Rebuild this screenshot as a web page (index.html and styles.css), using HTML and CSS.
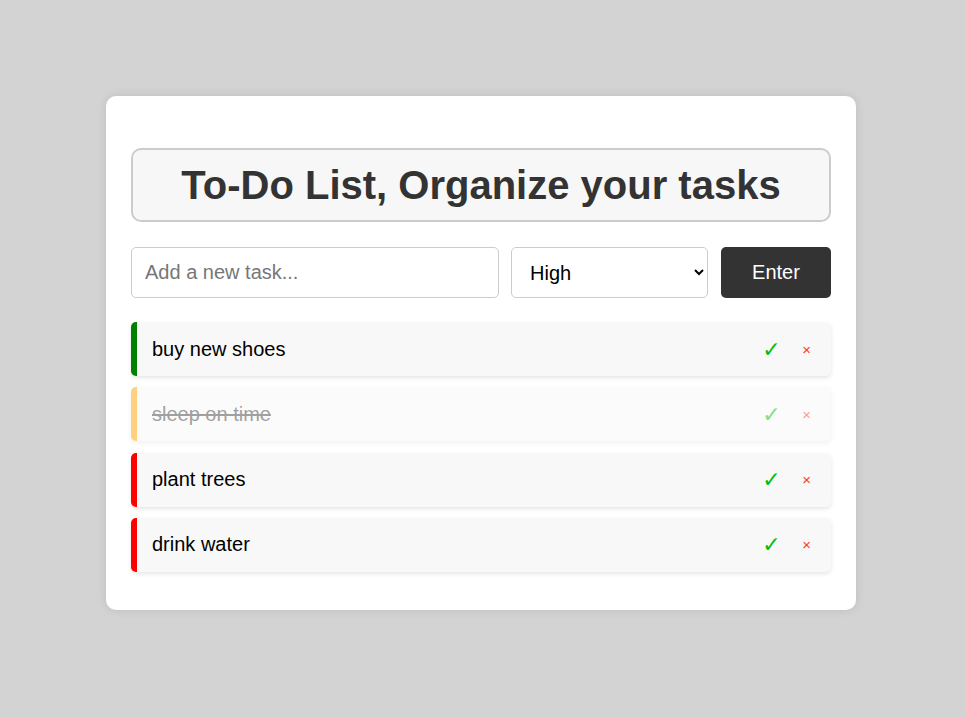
FILE: index.html
```html
<!DOCTYPE html>
<html>
<head>
<meta charset="utf-8">
<link rel="stylesheet" href="styles.css">
</head>
<body>
<div class="card">
  <h1 class="title">To-Do List, Organize your tasks</h1>
  <div class="form">
    <input class="task-input" type="text" placeholder="Add a new task...">
    <select class="priority">
      <option>High</option>
      <option>Medium</option>
      <option>Low</option>
    </select>
    <button class="enter">Enter</button>
  </div>
  <ul class="list">
    <li class="item low"><span class="text">buy new shoes</span><span class="actions"><span class="check">✓</span><span class="del">×</span></span></li>
    <li class="item medium done"><span class="text">sleep on time</span><span class="actions"><span class="check">✓</span><span class="del">×</span></span></li>
    <li class="item high"><span class="text">plant trees</span><span class="actions"><span class="check">✓</span><span class="del">×</span></span></li>
    <li class="item high"><span class="text">drink water</span><span class="actions"><span class="check">✓</span><span class="del">×</span></span></li>
  </ul>
</div>
</body>
</html>
```
FILE: styles.css
```css
html, body {
  margin: 0;
  padding: 0;
}
body {
  background: #d3d3d3;
  font-family: "Liberation Sans", Arial, sans-serif;
  padding-top: 96px;
  height: 718px;
  box-sizing: border-box;
}
.card {
  width: 750px;
  box-sizing: border-box;
  margin: 0 0 0 106px;
  background: #fff;
  border-radius: 10px;
  padding: 52px 25px 27px;
  box-shadow: 0 0 10px rgba(0,0,0,0.1);
}
.title {
  margin: 0 0 25px;
  border: 2px solid #ccc;
  border-radius: 10px;
  background: #f7f7f7;
  color: #333;
  text-align: center;
  font-size: 40px;
  font-weight: bold;
  height: 74px;
  box-sizing: border-box;
  display: flex;
  align-items: center;
  justify-content: center;
}
.form {
  display: flex;
  gap: 12px;
  margin-bottom: 24px;
}
.task-input {
  width: 368px;
  height: 51px;
  box-sizing: border-box;
  border: 1px solid #ccc;
  border-radius: 5px;
  padding: 0 13px;
  font-size: 20px;
  font-family: "Liberation Sans", Arial, sans-serif;
  color: #000;
}
.task-input::placeholder { color: #777; }
.priority {
  width: 197px;
  height: 51px;
  box-sizing: border-box;
  border: 1px solid #ccc;
  border-radius: 5px;
  padding: 0 12px 0 14px;
  font-size: 20px;
  font-family: "Liberation Sans", Arial, sans-serif;
  background: #fff;
  color: #000;
}
.enter {
  margin-left: 1px;
  flex: 1;
  height: 51px;
  border: none;
  border-radius: 5px;
  background: #333;
  color: #fff;
  font-size: 20px;
  font-family: "Liberation Sans", Arial, sans-serif;
}
.list {
  list-style: none;
  margin: 0;
  padding: 0;
}
.item {
  display: flex;
  align-items: center;
  height: 54px;
  box-sizing: border-box;
  margin-bottom: 11.33px;
  background: #f8f8f8;
  border-left: 6px solid;
  border-radius: 5px;
  padding-left: 15px;
  box-shadow: 0 2px 4px rgba(0,0,0,0.1);
  font-size: 20px;
  color: #000;
}
.item.low { border-left-color: #008000; }
.item.medium { border-left-color: #ffa500; }
.item.high { border-left-color: #ff0000; }
.item.done { opacity: 0.5; }
.item.done .text { text-decoration: line-through; color: #444; }
.text { flex: 1; }
.actions {
  display: flex;
  align-items: center;
  margin-right: 20px;
}
.check {
  color: #00c000;
  font-size: 22px;
  width: 40px;
  margin-left: 2px;
  font-family: "DejaVu Sans", sans-serif;
}
.del {
  color: #ff3b1f;
  font-size: 15px;
  font-family: "Liberation Sans", Arial, sans-serif;
}
```
